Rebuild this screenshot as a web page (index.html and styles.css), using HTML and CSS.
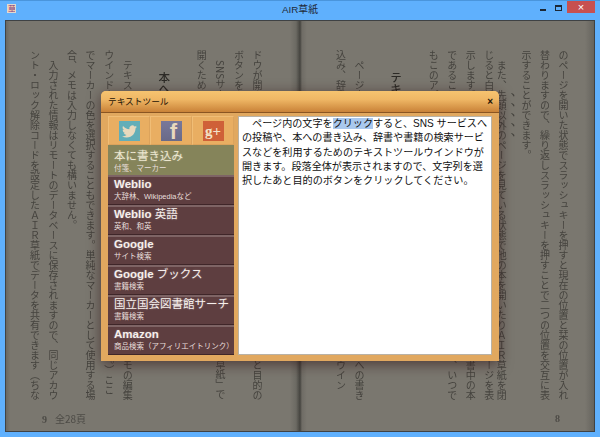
FILE: index.html
```html
<!DOCTYPE html>
<html lang="ja">

<head>
    <meta charset="UTF-8">
    <title>AIR草紙</title>
    <link rel="stylesheet" href="styles.css">
</head>

<body>
    <div class="win">
        <!-- title bar -->
        <div class="titlebar">
            <div class="app-icon">草</div>
            <div class="win-title">AIR草紙</div>
            <div class="win-btns">
                <span class="btn-min"></span>
                <span class="btn-max"></span>
                <span class="btn-close">×</span>
            </div>
        </div>

        <!-- book -->
        <div class="book">
            <div class="page page-left">
                <div class="text">
                    <div class="ln">ドウが開きます。段落全体が表示されますので、文字列を選択したあと目的の</div>
                    <div class="ln">ボタンをクリックしてください。</div>
                    <div class="ln">　SNSサービスへの投稿や書籍の検索を、簡単に行えるのが「ＡＩＲ草紙」で</div>
                    <div class="ln">開くためのボタンです。</div>
                    <div class="ln"></div>
                    <div class="ln head">　本への書き込み</div>
                    <div class="ln"></div>
                    <div class="ln">　テキスト部分を選択すると付箋を貼ったりメモを書いたりでき、メモの編集</div>
                    <div class="ln">ウインドウでは、メモとマーカーの編集ができます（保存されません。）ここ</div>
                    <div class="ln">でマーカーの色を選択することもできます。単純なマーカーとして使用する場</div>
                    <div class="ln">合、メモは入力しなくても構いません。</div>
                    <div class="ln">　入力された情報はリモートのデータベースに保存されますので、同じアカウ</div>
                    <div class="ln">ント・ロック解除コードを設定したＡＩＲ草紙でデータを共有できます（ちな</div>
                </div>
                <div class="folio">9<span class="total">全28頁</span></div>
            </div>
            <div class="page page-right">
                <div class="text">
                    <div class="ln">のページを開いた状態でスラッシュキーを押すと現在の位置と栞の位置が入れ</div>
                    <div class="ln">替わりますので、繰り返しスラッシュキーを押すことで二つの位置を交互に表</div>
                    <div class="ln">示することができます。</div>
                    <div class="ln">　また、<span class="dots">先頭以外の</span>ページを見ている状態で他の本を開いたりＡＩＲ草紙を閉</div>
                    <div class="ln">じると白紙のページを表示しますが、すぐに最後に開いていた元のページを表</div>
                    <div class="ln">示します。また、本棚を開いた状態で任意のページを指定すると、蔵書中の本</div>
                    <div class="ln">であることも確認できます。この状態で再びスラッシュキーを押せば、いつで</div>
                    <div class="ln">もこのアプリケーションの本を読むことができます。</div>
                    <div class="ln"></div>
                    <div class="ln head">　テキストツール</div>
                    <div class="ln"></div>
                    <div class="ln">　ページ内の文字をクリックすると、ＳＮＳサービスへの投稿や、本への書き</div>
                    <div class="ln">込み、辞書や書籍の検索サービス等を利用するためのテキストツールウイン</div>
                </div>
                <div class="folio folio-right">8</div>
            </div>
        </div>

        <!-- text tool dialog -->
        <div class="dialog">
            <div class="dlg-head">
                <span>テキストツール</span>
                <span class="dlg-close">×</span>
            </div>
            <div class="dlg-body">
                <div class="side">
                    <div class="social">
                        <div class="soc-cell">
                            <div class="soc soc-tw">
                                <svg viewBox="0 0 24 24" width="15" height="15">
                                    <path fill="#e9d9bd" d="M23.953 4.57a10 10 0 01-2.825.775 4.958 4.958 0 002.163-2.723c-.951.555-2.005.959-3.127 1.184a4.92 4.92 0 00-8.384 4.482C7.69 8.095 4.067 6.13 1.64 3.162a4.822 4.822 0 00-.666 2.475c0 1.71.87 3.213 2.188 4.096a4.904 4.904 0 01-2.228-.616v.06a4.923 4.923 0 003.946 4.827 4.996 4.996 0 01-2.212.085 4.936 4.936 0 004.604 3.417 9.867 9.867 0 01-6.102 2.105c-.39 0-.779-.023-1.17-.067a13.995 13.995 0 007.557 2.209c9.053 0 13.998-7.496 13.998-13.985 0-.21 0-.42-.015-.63A9.935 9.935 0 0024 4.59z"/>
                                </svg>
                            </div>
                        </div>
                        <div class="soc-cell">
                            <div class="soc soc-fb">f</div>
                        </div>
                        <div class="soc-cell">
                            <div class="soc soc-gp">g+</div>
                        </div>
                    </div>
                    <div class="menu">
                        <div class="item item-on">
                            <div class="item-t thin">本に書き込み</div>
                            <div class="item-s">付箋、マーカー</div>
                        </div>
                        <div class="item">
                            <div class="item-t">Weblio</div>
                            <div class="item-s">大辞林、Wikipediaなど</div>
                        </div>
                        <div class="item">
                            <div class="item-t">Weblio <span class="thin">英語</span></div>
                            <div class="item-s">英和、和英</div>
                        </div>
                        <div class="item">
                            <div class="item-t">Google</div>
                            <div class="item-s">サイト検索</div>
                        </div>
                        <div class="item">
                            <div class="item-t">Google <span class="thin">ブックス</span></div>
                            <div class="item-s">書籍検索</div>
                        </div>
                        <div class="item">
                            <div class="item-t thin">国立国会図書館サーチ</div>
                            <div class="item-s">書籍検索</div>
                        </div>
                        <div class="item">
                            <div class="item-t">Amazon</div>
                            <div class="item-s">商品検索（アフィリエイトリンク）</div>
                        </div>
                    </div>
                </div>
                <div class="panel">
                    <p>　ページ内の文字を<span class="sel">クリック</span>すると、SNS サービスへ<br>の投稿や、本への書き込み、辞書や書籍の検索サービ<br>スなどを利用するためのテキストツールウインドウが<br>開きます。段落全体が表示されますので、文字列を選<br>択したあと目的のボタンをクリックしてください。</p>
                </div>
            </div>
        </div>
    </div>
</body>

</html>
```
FILE: styles.css
```css
* {
    margin: 0;
    padding: 0;
    box-sizing: border-box;
}

html,
body {
    width: 600px;
    height: 437px;
    overflow: hidden;
}

body {
    font-family: "Liberation Sans", "Noto Sans CJK JP", sans-serif;
}

.win {
    position: relative;
    display: flex;
    flex-direction: column;
    width: 600px;
    height: 437px;
    padding: 0 5px 5px;
    background: #5fb0fd;
    border-top: 1px solid #4a95dc;
}

/* title bar */
.titlebar {
    display: grid;
    grid-template-columns: 1fr auto 1fr;
    align-items: start;
    height: 19px;
}

.app-icon {
    width: 9px;
    height: 9px;
    margin: 3px 0 0 2px;
    font-size: 8px;
    line-height: 9px;
    text-align: center;
    color: #7a3f8a;
    background: #f0c8a8;
    border: 1px solid #e0d8d0;
    overflow: hidden;
}

.win-title {
    padding-top: 2px;
    font-size: 9.8px;
    line-height: 14px;
    color: #1f2a38;
}

.win-btns {
    display: flex;
    justify-content: flex-end;
    align-items: flex-start;
}

.btn-min {
    width: 6px;
    height: 2px;
    margin: 8px 9px 0 0;
    background: #1c2836;
}

.btn-max {
    width: 7px;
    height: 6px;
    margin: 4px 5px 0 0;
    border: 1px solid #1c2836;
    border-top-width: 2px;
}

.btn-close {
    width: 28px;
    height: 12px;
    font-size: 11px;
    line-height: 12px;
    text-align: center;
    color: #fff;
    background: #c75050;
}

/* book */
.book {
    flex: 1;
    display: flex;
    overflow: hidden;
    background: #7a776f;
    border: 1px solid #3f4244;
    box-shadow: inset 0 0 4px #5f5d57;
}

.page {
    flex: 0 0 50%;
    display: flex;
    flex-direction: column;
    height: 100%;
    padding-top: 29px;
    color: #45433e;
    filter: blur(0.4px);
}

.page-left {
    padding-right: 34px;
    background: linear-gradient(to right, #6a6862 0, #7a776f 4px, #7a776f 284px, #6c6a63 290px, #45443f 294px);
}

.page-right {
    padding-right: 22px;
    background: linear-gradient(to right, #45443f 0, #6f6c65 2px, #7a776f 7px, #7a776f 285px, #66645e 294px);
}

.text {
    writing-mode: vertical-rl;
    display: flex;
    flex-direction: column;
    height: 352px;
    font-family: "Noto Sans CJK JP", sans-serif;
    font-size: 10px;
    line-height: 18.55px;
    white-space: nowrap;
}

.ln {
    width: 18.55px;
    height: 352px;
}

.head {
    padding-top: 10px;
    font-size: 11.5px;
    font-weight: 500;
    color: #2c2a26;
}

.dots {
    text-emphasis: sesame;
    text-emphasis-position: right;
}

.folio {
    padding: 11px 0 0 36px;
    font-family: "Liberation Serif", serif;
    font-size: 10px;
    font-weight: 700;
    line-height: 12px;
    color: #4d4b46;
}

.total {
    margin-left: 8px;
    font-family: "Noto Sans CJK JP", sans-serif;
    font-weight: 400;
}

.folio-right {
    padding-left: 255px;
}

/* dialog lies over the book */
.dialog {
    position: absolute;
    top: 90px;
    left: 101px;
    display: flex;
    flex-direction: column;
    width: 398px;
    height: 270px;
    background: #e1a85f;
    border-radius: 5px 5px 0 0;
    box-shadow: 0 3px 14px rgba(45, 15, 15, 0.6);
}

.dlg-head {
    display: flex;
    justify-content: space-between;
    align-items: center;
    height: 22px;
    padding: 0 6px 0 7px;
    font-size: 8.7px;
    color: #241405;
    background: linear-gradient(#f6c470, #efb765 40%, #c98238);
    border-bottom: 1px solid #8a5522;
    border-radius: 5px 5px 0 0;
}

.dlg-close {
    font-size: 10px;
    font-weight: 700;
}

.dlg-body {
    flex: 1;
    display: flex;
    gap: 4px;
    padding: 3px 7px 6px;
}

.side {
    display: flex;
    flex-direction: column;
    width: 126px;
}

.social {
    display: flex;
    height: 29px;
}

.soc-cell {
    flex: 1;
    display: flex;
    justify-content: center;
    padding-top: 4px;
    background: #e9ae62;
    border: 1px solid #dca35c;
    border-top-color: #f0bd76;
    border-left-color: #f0bd76;
}

.soc {
    display: flex;
    justify-content: center;
    align-items: center;
    width: 21px;
    height: 20px;
    overflow: hidden;
}

.soc-tw {
    background: #63aeb8;
}

.soc-fb {
    padding: 2px 0 0 5px;
    font-size: 22px;
    font-weight: 700;
    line-height: 20px;
    color: #e9d9bd;
    background: linear-gradient(#78789a, #6a6a88);
}

.soc-gp {
    font-family: "Liberation Serif", serif;
    font-size: 15px;
    font-weight: 700;
    line-height: 18px;
    color: #f3e3c9;
    background: #cf6038;
}

.menu {
    flex: 1;
    display: grid;
    grid-template-rows: repeat(7, 1fr);
}

.item {
    padding: 0 0 0 6px;
    color: #f6efec;
    background: #5e3e40;
    border-top: 2px solid #7e6465;
    border-bottom: 1px solid #3f2629;
}

.item-on {
    padding-top: 2px;
    color: #ece6cf;
    background: #85845a;
    border-color: #85845a;
}

.item-t {
    font-size: 11.5px;
    font-weight: 700;
    line-height: 15px;
    text-shadow: 0 0 2px rgba(255, 255, 255, 0.3);
}

.thin {
    font-weight: 400;
}

.item-s {
    font-size: 7.5px;
    line-height: 10px;
    white-space: nowrap;
    color: #e9dfdc;
}

/* text panel */
.panel {
    flex: 1;
    padding: 0 0 0 3px;
    font-size: 10.1px;
    line-height: 14.3px;
    white-space: nowrap;
    color: #111;
    background: #fff;
    border: 1px solid #b9b2a6;
}

.sel {
    background: #a9c8ee;
}
```
